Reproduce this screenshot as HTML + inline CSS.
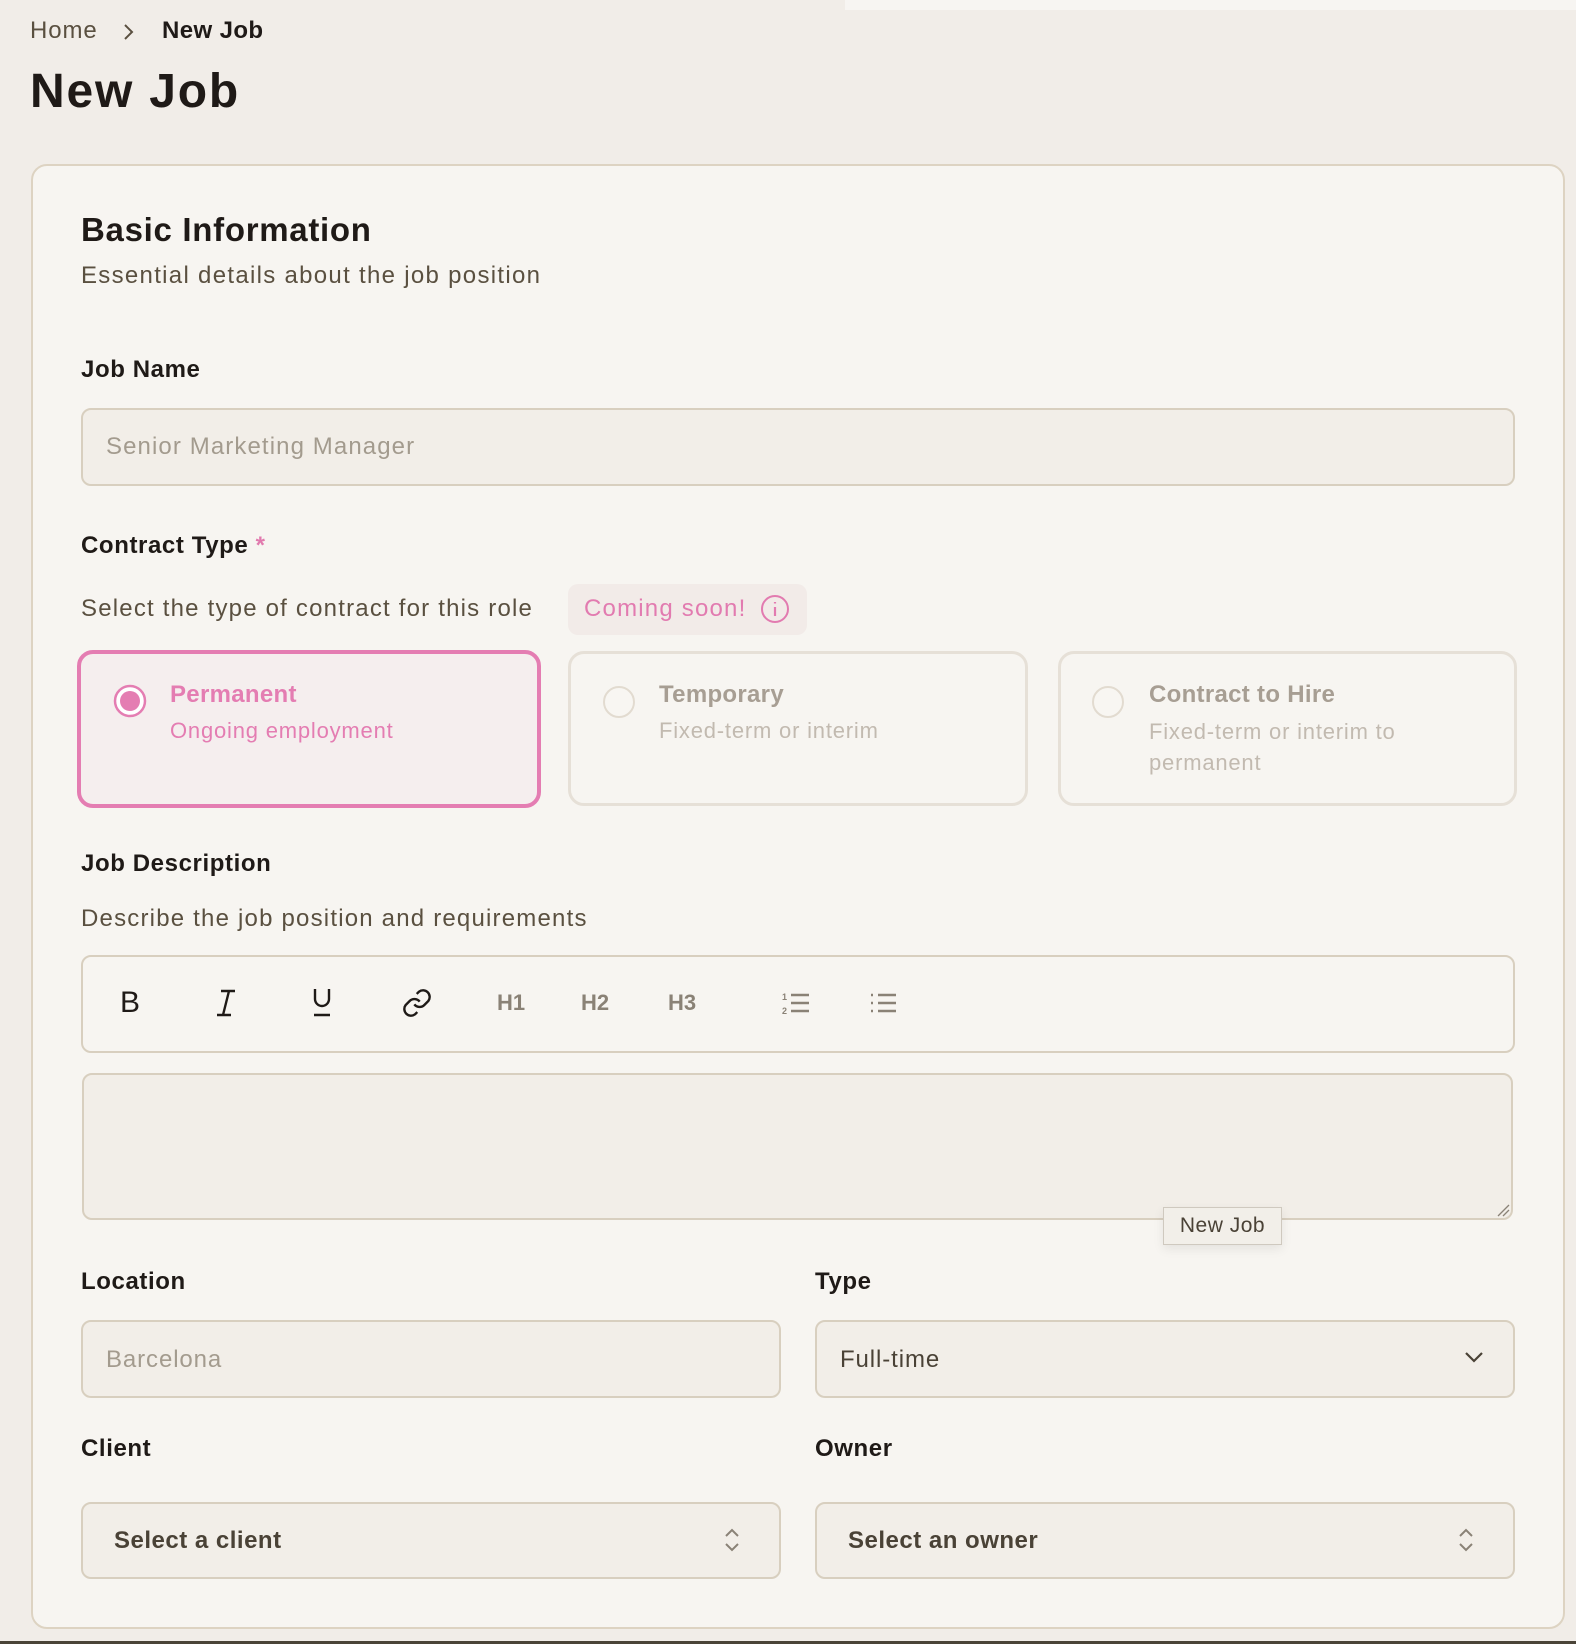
<!DOCTYPE html>
<html><head><meta charset="utf-8"><style>
*{box-sizing:border-box;margin:0;padding:0}
body{width:1576px;height:1644px;background:#f1ede8;font-family:"Liberation Sans",sans-serif;position:relative;overflow:hidden;color:#1f1a17;letter-spacing:0.9px}
.a{position:absolute;white-space:nowrap}
.lbl{font-size:24px;font-weight:bold;color:#1f1a17;letter-spacing:0.6px}
.muted{font-size:24px;color:#5a5040}
.box{position:absolute;border:2px solid #d8cfbf;border-radius:10px;background:#f2eee8}
.opt{position:absolute;border:3px solid #e6e0d7;border-radius:16px;background:#f7f5f1}
.ot{font-size:24px;font-weight:bold;letter-spacing:0.3px}
.os{font-size:22px;letter-spacing:0.8px}
.tb{position:absolute;top:1003px;transform:translate(-50%,-50%);font-size:22px;font-weight:bold;color:#8a8276;letter-spacing:0}
</style></head><body>
<div class="a" style="left:845px;top:0;width:731px;height:10px;background:#f7f5f2"></div>
<div class="a" style="left:30px;top:17px;font-size:24px;color:#5a5040">Home</div>
<svg class="a" style="left:122px;top:22px" width="14" height="20" viewBox="0 0 14 20"><path d="M3 3l7 7-7 7" fill="none" stroke="#5a5040" stroke-width="2"/></svg>
<div class="a" style="left:162px;top:17px;font-size:24px;font-weight:bold;letter-spacing:0.4px">New Job</div>
<div class="a" style="left:30px;top:64px;font-size:48px;font-weight:bold;letter-spacing:1.8px">New Job</div>

<div class="a" style="left:31px;top:164px;width:1534px;height:1465px;background:#f7f5f1;border:2px solid #ddd3c2;border-radius:16px"></div>

<div class="a" style="left:81px;top:211px;font-size:33px;font-weight:bold;letter-spacing:0.7px">Basic Information</div>
<div class="a muted" style="left:81px;top:262px;letter-spacing:1.3px">Essential details about the job position</div>

<div class="a lbl" style="left:81px;top:356px">Job Name</div>
<div class="box" style="left:81px;top:408px;width:1434px;height:78px"></div>
<div class="a" style="left:106px;top:433px;font-size:24px;color:#a39b8e;letter-spacing:1.1px">Senior Marketing Manager</div>

<div class="a lbl" style="left:81px;top:532px">Contract Type <span style="color:#e17aae">*</span></div>
<div class="a muted" style="left:81px;top:595px;letter-spacing:1.2px">Select the type of contract for this role</div>
<div class="a" style="left:568px;top:584px;width:239px;height:51px;background:#f2ebe8;border-radius:10px"></div>
<div class="a" style="left:584px;top:595px;font-size:24px;color:#e27bb0;letter-spacing:1.2px">Coming soon!</div>
<svg class="a" style="left:760px;top:594px" width="30" height="30" viewBox="0 0 30 30"><circle cx="15" cy="15" r="13" fill="none" stroke="#e27bb0" stroke-width="2"/><path d="M15 13v9M15 8v1.5" stroke="#e27bb0" stroke-width="2.2"/></svg>

<div class="opt" style="left:77px;top:650px;width:464px;height:158px;border:4px solid #e47db2;background:#f5eeee"></div>
<svg class="a" style="left:113px;top:684px" width="34" height="34"><circle cx="17" cy="17" r="15" fill="#fff" stroke="#e47db2" stroke-width="2.5"/><circle cx="17" cy="17" r="10" fill="#e47db2"/></svg>
<div class="a ot" style="left:170px;top:681px;color:#e47db2">Permanent</div>
<div class="a os" style="left:170px;top:718px;color:#e47db2">Ongoing employment</div>

<div class="opt" style="left:568px;top:651px;width:460px;height:155px"></div>
<svg class="a" style="left:602px;top:685px" width="34" height="34"><circle cx="17" cy="17" r="15" fill="#f8f6f2" stroke="#e2dbd0" stroke-width="2"/></svg>
<div class="a ot" style="left:659px;top:681px;color:#a79e93">Temporary</div>
<div class="a os" style="left:659px;top:718px;color:#c2bab0">Fixed-term or interim</div>

<div class="opt" style="left:1058px;top:651px;width:459px;height:155px"></div>
<svg class="a" style="left:1091px;top:685px" width="34" height="34"><circle cx="17" cy="17" r="15" fill="#f8f6f2" stroke="#e2dbd0" stroke-width="2"/></svg>
<div class="a ot" style="left:1149px;top:681px;color:#a79e93">Contract to Hire</div>
<div class="a os" style="left:1149px;top:716px;color:#c2bab0;line-height:31px;white-space:normal;width:290px">Fixed-term or interim to permanent</div>

<div class="a lbl" style="left:81px;top:850px">Job Description</div>
<div class="a muted" style="left:81px;top:905px;letter-spacing:1.2px">Describe the job position and requirements</div>

<div class="box" style="left:81px;top:955px;width:1434px;height:98px;background:#f7f5f1"></div>
<div class="tb" style="left:130px;font-size:30px;font-weight:normal;color:#1f1a17">B</div>
<svg class="a" style="left:212px;top:988px" width="28" height="30"><path d="M9 3h14M5 27h14M17 3l-6 24" stroke="#1f1a17" stroke-width="2.4" fill="none"/></svg>
<svg class="a" style="left:308px;top:986px" width="28" height="32"><path d="M7 3v10a7 7 0 0014 0V3M6 29h16" stroke="#1f1a17" stroke-width="2.4" fill="none"/></svg>
<svg class="a" style="left:401px;top:986px" width="32" height="34" viewBox="0 0 24 24"><path d="M10 13a5 5 0 007.5.5l3-3a5 5 0 00-7-7l-1.7 1.7M14 11a5 5 0 00-7.5-.5l-3 3a5 5 0 007 7l1.7-1.7" stroke="#1f1a17" stroke-width="1.8" fill="none"/></svg>
<div class="tb" style="left:511px">H1</div>
<div class="tb" style="left:595px">H2</div>
<div class="tb" style="left:682px">H3</div>
<svg class="a" style="left:782px;top:990px" width="28" height="26"><text x="0" y="10" font-size="9" font-family="Liberation Sans" fill="#8a8276" font-weight="bold">1</text><text x="0" y="24" font-size="9" font-family="Liberation Sans" fill="#8a8276" font-weight="bold">2</text><path d="M9 5h18M9 13h18M9 21h18" stroke="#8a8276" stroke-width="2.5"/></svg>
<svg class="a" style="left:869px;top:990px" width="28" height="26"><path d="M2 5h2M2 13h2M2 21h2M9 5h18M9 13h18M9 21h18" stroke="#8a8276" stroke-width="2.5"/></svg>

<div class="box" style="left:82px;top:1073px;width:1431px;height:147px"></div>
<svg class="a" style="left:1496px;top:1203px" width="14" height="14"><path d="M2 13L13 2M7 13l6-6" stroke="#8a8276" stroke-width="1.3"/></svg>
<div class="a" style="left:1163px;top:1207px;width:119px;height:38px;background:#f2efe9;border:1px solid #cfc9bf;box-shadow:0 4px 10px rgba(0,0,0,.08);font-size:21px;color:#4a4236;text-align:center;line-height:36px;letter-spacing:0.5px">New Job</div>

<div class="a lbl" style="left:81px;top:1268px">Location</div>
<div class="a lbl" style="left:815px;top:1268px">Type</div>
<div class="box" style="left:81px;top:1320px;width:700px;height:78px"></div>
<div class="a" style="left:106px;top:1346px;font-size:24px;color:#a39b8e">Barcelona</div>
<div class="box" style="left:815px;top:1320px;width:700px;height:78px"></div>
<div class="a" style="left:840px;top:1346px;font-size:24px;color:#4a4236">Full-time</div>
<svg class="a" style="left:1463px;top:1350px" width="22" height="16"><path d="M3 3l8 8 8-8" stroke="#4a4236" stroke-width="2.2" fill="none"/></svg>

<div class="a lbl" style="left:81px;top:1435px">Client</div>
<div class="a lbl" style="left:815px;top:1435px">Owner</div>
<div class="box" style="left:81px;top:1502px;width:700px;height:77px"></div>
<div class="a" style="left:114px;top:1527px;font-size:24px;font-weight:bold;color:#4a4236;letter-spacing:0.5px">Select a client</div>
<svg class="a" style="left:722px;top:1526px" width="20" height="28"><path d="M4 10l6-6 6 6M4 18l6 6 6-6" stroke="#8a8276" stroke-width="2" fill="none"/></svg>
<div class="box" style="left:815px;top:1502px;width:700px;height:77px"></div>
<div class="a" style="left:848px;top:1527px;font-size:24px;font-weight:bold;color:#4a4236;letter-spacing:0.5px">Select an owner</div>
<svg class="a" style="left:1456px;top:1526px" width="20" height="28"><path d="M4 10l6-6 6 6M4 18l6 6 6-6" stroke="#8a8276" stroke-width="2" fill="none"/></svg>

<div class="a" style="left:0;top:1641px;width:1576px;height:3px;background:#4a4438"></div>
</body></html>
